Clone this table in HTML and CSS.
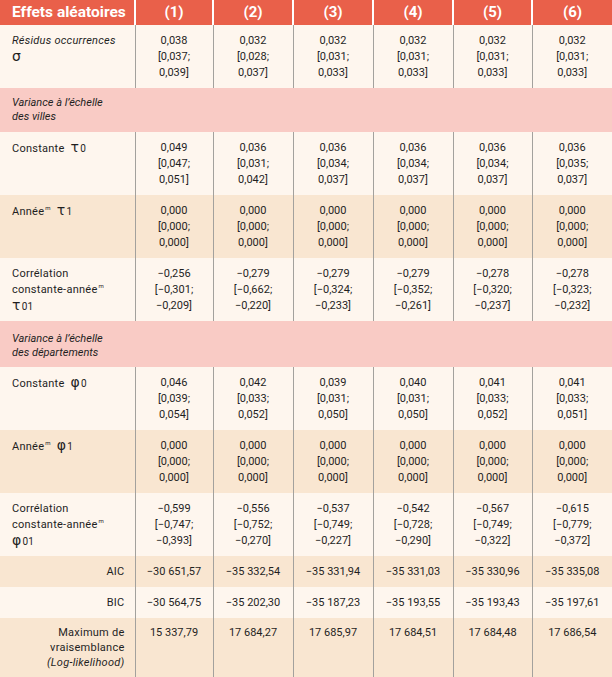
FILE: index.html
```html
<!DOCTYPE html>
<html lang="fr">
<head>
<meta charset="utf-8">
<link rel="stylesheet" href="styles.css">
</head>
<body>
<table class="tbl">
  <colgroup>
    <col class="c-label"><col class="c-a"><col class="c-b"><col class="c-b"><col class="c-b"><col class="c-a2"><col class="c-b">
  </colgroup>
  <thead>
    <tr class="head">
      <th class="h-label">Effets aléatoires</th>
      <th>(1)</th><th>(2)</th><th>(3)</th><th>(4)</th><th>(5)</th><th>(6)</th>
    </tr>
  </thead>
  <tbody>
    <tr class="r-data light">
      <td class="lbl"><i>Résidus occurrences</i><br><span class="gk">σ</span></td>
      <td>0,038<br>[0,037;<br>0,039]</td>
      <td>0,032<br>[0,028;<br>0,037]</td>
      <td>0,032<br>[0,031;<br>0,033]</td>
      <td>0,032<br>[0,031;<br>0,033]</td>
      <td>0,032<br>[0,031;<br>0,033]</td>
      <td>0,032<br>[0,031;<br>0,033]</td>
    </tr>
    <tr class="r-sec">
      <td class="sec" colspan="7"><i>Variance à l’échelle<br>des villes</i></td>
    </tr>
    <tr class="r-data light">
      <td class="lbl">Constante&nbsp; <span class="gk">τ</span><span class="sub">0</span></td>
      <td>0,049<br>[0,047;<br>0,051]</td>
      <td>0,036<br>[0,031;<br>0,042]</td>
      <td>0,036<br>[0,034;<br>0,037]</td>
      <td>0,036<br>[0,034;<br>0,037]</td>
      <td>0,036<br>[0,034;<br>0,037]</td>
      <td>0,036<br>[0,035;<br>0,037]</td>
    </tr>
    <tr class="r-data beige">
      <td class="lbl">Année<sup class="sup">m</sup>&nbsp; <span class="gk">τ</span><span class="sub">1</span></td>
      <td>0,000<br>[0,000;<br>0,000]</td>
      <td>0,000<br>[0,000;<br>0,000]</td>
      <td>0,000<br>[0,000;<br>0,000]</td>
      <td>0,000<br>[0,000;<br>0,000]</td>
      <td>0,000<br>[0,000;<br>0,000]</td>
      <td>0,000<br>[0,000;<br>0,000]</td>
    </tr>
    <tr class="r-data light">
      <td class="lbl">Corrélation<br>constante-année<sup class="sup">m</sup><br><span class="gk">τ</span><span class="sub">01</span></td>
      <td>−0,256<br>[−0,301;<br>−0,209]</td>
      <td>−0,279<br>[−0,662;<br>−0,220]</td>
      <td>−0,279<br>[−0,324;<br>−0,233]</td>
      <td>−0,279<br>[−0,352;<br>−0,261]</td>
      <td>−0,278<br>[−0,320;<br>−0,237]</td>
      <td>−0,278<br>[−0,323;<br>−0,232]</td>
    </tr>
    <tr class="r-sec r-sec2">
      <td class="sec" colspan="7"><i>Variance à l’échelle<br>des départements</i></td>
    </tr>
    <tr class="r-data light">
      <td class="lbl">Constante&nbsp; <span class="gk">φ</span><span class="sub">0</span></td>
      <td>0,046<br>[0,039;<br>0,054]</td>
      <td>0,042<br>[0,033;<br>0,052]</td>
      <td>0,039<br>[0,031;<br>0,050]</td>
      <td>0,040<br>[0,031;<br>0,050]</td>
      <td>0,041<br>[0,033;<br>0,052]</td>
      <td>0,041<br>[0,033;<br>0,051]</td>
    </tr>
    <tr class="r-data beige">
      <td class="lbl">Année<sup class="sup">m</sup>&nbsp; <span class="gk">φ</span><span class="sub">1</span></td>
      <td>0,000<br>[0,000;<br>0,000]</td>
      <td>0,000<br>[0,000;<br>0,000]</td>
      <td>0,000<br>[0,000;<br>0,000]</td>
      <td>0,000<br>[0,000;<br>0,000]</td>
      <td>0,000<br>[0,000;<br>0,000]</td>
      <td>0,000<br>[0,000;<br>0,000]</td>
    </tr>
    <tr class="r-data light">
      <td class="lbl">Corrélation<br>constante-année<sup class="sup">m</sup><br><span class="gk">φ</span><span class="sub">01</span></td>
      <td>−0,599<br>[−0,747;<br>−0,393]</td>
      <td>−0,556<br>[−0,752;<br>−0,270]</td>
      <td>−0,537<br>[−0,749;<br>−0,227]</td>
      <td>−0,542<br>[−0,728;<br>−0,290]</td>
      <td>−0,567<br>[−0,749;<br>−0,322]</td>
      <td>−0,615<br>[−0,779;<br>−0,372]</td>
    </tr>
    <tr class="r-stat beige">
      <td class="lbl rt">AIC</td>
      <td>−30 651,57</td>
      <td>−35 332,54</td>
      <td>−35 331,94</td>
      <td>−35 331,03</td>
      <td>−35 330,96</td>
      <td>−35 335,08</td>
    </tr>
    <tr class="r-stat light">
      <td class="lbl rt">BIC</td>
      <td>−30 564,75</td>
      <td>−35 202,30</td>
      <td>−35 187,23</td>
      <td>−35 193,55</td>
      <td>−35 193,43</td>
      <td>−35 197,61</td>
    </tr>
    <tr class="r-max beige">
      <td class="lbl rt">Maximum de<br>vraisemblance<br><i>(Log-likelihood)</i></td>
      <td>15 337,79</td>
      <td>17 684,27</td>
      <td>17 685,97</td>
      <td>17 684,51</td>
      <td>17 684,48</td>
      <td>17 686,54</td>
    </tr>
  </tbody>
</table>
</body>
</html>
```
FILE: styles.css
```css
html, body {
  margin: 0;
  padding: 0;
  background: #ffffff;
}
.tbl {
  width: 612px;
  table-layout: fixed;
  border-collapse: collapse;
  font-family: Roboto, "Liberation Sans", sans-serif;
  font-size: 11px;
  color: #1f1f1f;
}
.c-label { width: 135px; }
.c-a { width: 78px; }
.c-a2 { width: 79px; }
.c-b { width: 80px; }

.head th {
  background: #e9604a;
  color: #ffffff;
  font-weight: 700;
  font-size: 15px;
  height: 25px;
  padding: 0;
  text-align: center;
  border-left: 2px solid #ffffff;
  line-height: 25px;
}
.head th.h-label {
  border-left: none;
  text-align: left;
  padding-left: 12px;
  font-size: 15.5px;
}
.tbl td {
  padding: 0;
  text-align: center;
  vertical-align: top;
  border-left: 1px solid #a3a19d;
  line-height: 16px;
}
.tbl td.lbl {
  border-left: none;
  text-align: left;
  padding-left: 12px;
  letter-spacing: 0.25px;
}
.tbl td.rt {
  text-align: right;
  padding-right: 10px;
}
.light td { background: #fef6ee; }
.beige td { background: #f9e6d1; }

.r-data td {
  height: 63px;
  padding-top: 8px;
  box-sizing: border-box;
}
.r-data td.lbl { padding-top: 8px; }

.r-sec td.sec {
  background: #f9cbc5;
  height: 44px;
  box-sizing: border-box;
  padding: 0 0 0 12px;
  vertical-align: middle;
  text-align: left;
  border-left: none;
  line-height: 14px;
}
.r-sec2 td.sec { height: 46px; padding-top: 4px; }

.r-stat td {
  height: 31px;
  box-sizing: border-box;
  vertical-align: middle;
}
.r-max td {
  height: 60px;
  box-sizing: border-box;
  padding-top: 7px;
  line-height: 15px;
}
.gk {
  font-family: "DejaVu Sans", sans-serif;
  font-size: 14px;
  line-height: 14px;
}
.sub {
  font-size: 10px;
  margin-left: 1px;
}
.sup {
  font-size: 6px;
  vertical-align: 5px;
  line-height: 0;
  margin-left: 1px;
}
```
